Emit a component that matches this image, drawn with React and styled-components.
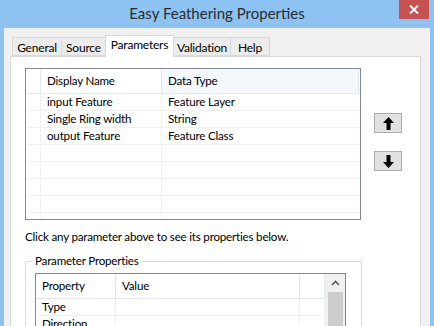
import React from "react";
import styled, { createGlobalStyle } from "styled-components";

const Global = createGlobalStyle`
  html, body { margin: 0; padding: 0; overflow: hidden; }
  body {
    font-family: "Lato", "Liberation Sans", sans-serif;
    font-size: 11.6px;
    letter-spacing: -0.2px;
    color: #000;
  }
`;

const Window = styled.div`
  width: 434px;
  height: 326px;
  background: #8cc3f3;
  display: flex;
  flex-direction: column;
  overflow: hidden;
`;

const TitleBar = styled.div`
  height: 28px;
  flex: none;
  display: grid;
  grid-template-columns: 1fr auto 1fr;
  align-items: start;
`;

const Title = styled.div`
  grid-column: 2;
  font-size: 15px;
  letter-spacing: 0;
  line-height: 27px;
  color: #2b2b2b;
`;

const CloseButton = styled.div`
  grid-column: 3;
  justify-self: end;
  margin-right: 5px;
  width: 30px;
  height: 19px;
  background: #c75050;
  display: flex;
  align-items: center;
  justify-content: center;
`;

const Body = styled.div`
  flex: 1;
  margin: 0 4px 0 4px;
  background: #f0f0f0;
  padding: 7px 9px 0 6px;
  display: flex;
  flex-direction: column;
  min-height: 0;
`;

const TabRow = styled.div`
  display: flex;
  align-items: flex-end;
  padding-left: 2px;
  height: 21px;
  position: relative;
  z-index: 1;
`;

const Tab = styled.div`
  height: ${(p) => (p.$active ? "22px" : "19px")};
  margin-bottom: ${(p) => (p.$active ? "-1px" : "0")};
  box-sizing: border-box;
  background: ${(p) => (p.$active ? "#ffffff" : "#ececec")};
  border: 1px solid #d9d9d9;
  border-bottom: ${(p) => (p.$active ? "none" : "1px solid #d9d9d9")};
  margin-left: ${(p) => (p.$first ? "0" : "-1px")};
  line-height: ${(p) => (p.$active ? "18px" : "19px")};
  font-size: 12px;
  white-space: nowrap;
  width: ${(p) => p.$w}px;
  text-align: center;
`;

const Panel = styled.div`
  flex: 1;
  background: #ffffff;
  border: 1px solid #d9d9d9;
  padding: 11px 0 0 14px;
  display: flex;
  flex-direction: column;
`;

const TopRow = styled.div`
  display: flex;
  align-items: flex-start;
  gap: 13px;
`;

const ListBox = styled.div`
  width: 336px;
  height: 152px;
  box-sizing: border-box;
  border: 1px solid #828790;
  overflow: hidden;
  display: grid;
  grid-template-columns: ${(p) => p.$cols};
  grid-auto-rows: 17px;
  grid-template-rows: 25px;
  align-content: start;
`;

const HeadCell = styled.div`
  box-sizing: border-box;
  border-right: 1px solid ${(p) => (p.$hot ? "#dde6f2" : "#e3e8f0")};
  border-bottom: 1px solid #e3e8f0;
  background: ${(p) => (p.$hot ? "#f4f8fd" : "#ffffff")};
  padding-left: 6px;
  line-height: 24px;
  white-space: nowrap;
  overflow: hidden;
`;

const Cell = styled.div`
  box-sizing: border-box;
  border-right: 1px solid ${(p) => (p.$noRight ? "transparent" : "#f0f0f0")};
  border-bottom: 1px solid #f0f0f0;
  padding-left: 6px;
  line-height: 16px;
  white-space: nowrap;
  overflow: hidden;
`;

const ButtonColumn = styled.div`
  display: flex;
  flex-direction: column;
  padding-top: 45px;
  gap: 18px;
`;

const ArrowButton = styled.div`
  width: 28px;
  height: 20px;
  box-sizing: border-box;
  background: #e1e1e1;
  border: 1px solid #adadad;
  display: flex;
  align-items: center;
  justify-content: center;
`;

const Hint = styled.div`
  margin-top: 9px;
  line-height: 16px;
`;

const GroupBox = styled.fieldset`
  margin: 8px 0 0 0;
  width: 337px;
  box-sizing: border-box;
  border: 1px solid #dcdcdc;
  border-bottom: none;
  padding: 4px 0 0 9px;
  flex: 1;
  min-height: 0;
`;

const Legend = styled.legend`
  padding: 0 2px;
  margin-left: -2px;
  line-height: 16px;
`;

const PropGrid = styled.div`
  width: 311px;
  height: 80px;
  box-sizing: border-box;
  border: 1px solid #828790;
  border-bottom: none;
  display: flex;
  overflow: hidden;
`;

const PropTable = styled.div`
  flex: 1;
  display: grid;
  grid-template-columns: 80px 184px 25px;
  grid-template-rows: 25px;
  grid-auto-rows: 17px;
  align-content: start;
`;

const ScrollBar = styled.div`
  width: 20px;
  background: #f0f0f0;
  display: flex;
  flex-direction: column;
  align-items: center;
`;

const ScrollArrow = styled.div`
  height: 18px;
  width: 100%;
  display: flex;
  align-items: center;
  justify-content: center;
`;

const Thumb = styled.div`
  width: 15px;
  flex: 1;
  background: #cdcdcd;
`;

const UpArrow = () => (
  <svg width="11" height="13" viewBox="0 0 11 13">
    <path d="M5.5 0 L11 6 L7.5 6 L7.5 13 L3.5 13 L3.5 6 L0 6 Z" fill="#000" />
  </svg>
);

const DownArrow = () => (
  <svg width="11" height="13" viewBox="0 0 11 13">
    <path d="M5.5 13 L11 7 L7.5 7 L7.5 0 L3.5 0 L3.5 7 L0 7 Z" fill="#000" />
  </svg>
);

const CloseIcon = () => (
  <svg width="10" height="9" viewBox="0 0 10 9">
    <path d="M1 0.5 L9 8.5 M9 0.5 L1 8.5" stroke="#fff" strokeWidth="2" />
  </svg>
);

const Chevron = () => (
  <svg width="9" height="6" viewBox="0 0 9 6">
    <path d="M1 5 L4.5 1.5 L8 5" stroke="#5a5a5a" strokeWidth="1.6" fill="none" />
  </svg>
);

const params = [
  ["input Feature", "Feature Layer"],
  ["Single Ring width", "String"],
  ["output Feature", "Feature Class"],
  ["", ""],
  ["", ""],
  ["", ""],
  ["", ""],
  ["", ""],
];

const tabs = [
  { label: "General", w: 50 },
  { label: "Source", w: 45 },
  { label: "Parameters", w: 69, active: true },
  { label: "Validation", w: 58 },
  { label: "Help", w: 40 },
];

export default function App() {
  return (
    <>
      <Global />
      <Window>
        <TitleBar>
          <Title>Easy Feathering Properties</Title>
          <CloseButton>
            <CloseIcon />
          </CloseButton>
        </TitleBar>
        <Body>
          <TabRow>
            {tabs.map((t, i) => (
              <Tab key={t.label} $active={t.active} $first={i === 0} $w={t.w}>
                {t.label}
              </Tab>
            ))}
          </TabRow>
          <Panel>
            <TopRow>
              <ListBox $cols="15px 121px 197px 1fr">
                <HeadCell />
                <HeadCell>Display Name</HeadCell>
                <HeadCell $hot>Data Type</HeadCell>
                <HeadCell />
                {params.map(([a, b], i) => (
                  <React.Fragment key={i}>
                    <Cell />
                    <Cell>{a}</Cell>
                    <Cell $noRight>{b}</Cell>
                    <Cell $noRight />
                  </React.Fragment>
                ))}
              </ListBox>
              <ButtonColumn>
                <ArrowButton>
                  <UpArrow />
                </ArrowButton>
                <ArrowButton>
                  <DownArrow />
                </ArrowButton>
              </ButtonColumn>
            </TopRow>
            <Hint>Click any parameter above to see its properties below.</Hint>
            <GroupBox>
              <Legend>Parameter Properties</Legend>
              <PropGrid>
                <PropTable>
                  <HeadCell>Property</HeadCell>
                  <HeadCell>Value</HeadCell>
                  <HeadCell />
                  <Cell>Type</Cell>
                  <Cell />
                  <Cell />
                  <Cell>Direction</Cell>
                  <Cell />
                  <Cell />
                </PropTable>
                <ScrollBar>
                  <ScrollArrow>
                    <Chevron />
                  </ScrollArrow>
                  <Thumb />
                </ScrollBar>
              </PropGrid>
            </GroupBox>
          </Panel>
        </Body>
      </Window>
    </>
  );
}
